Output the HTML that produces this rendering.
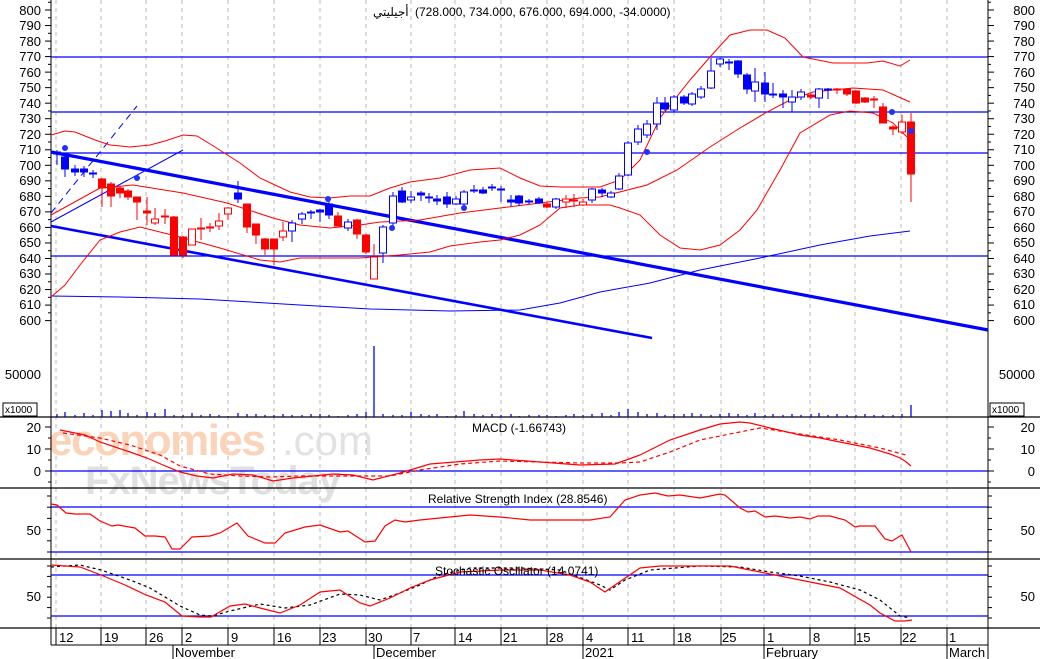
<!DOCTYPE html>
<html><head><meta charset="utf-8"><style>
body{margin:0;background:#fff;}
svg{display:block;font-family:"Liberation Sans",Arial,sans-serif;}
</style></head><body>
<svg id="s" width="1040" height="659" xmlns="http://www.w3.org/2000/svg">
<rect width="1040" height="659" fill="#fff"/>
<g id="grid"></g>
<!-- watermark -->
<text x="48" y="455" font-size="44" fill="#fbd3b8" font-weight="bold" letter-spacing="-1.5">economies</text>
<text x="282" y="455" font-size="42" fill="#e2e2e2">.com</text>
<text x="85" y="494" font-size="40" fill="#e0e0e0" font-weight="bold" letter-spacing="-1">FxNewsToday</text>
<g id="g"></g>
<!-- title -->
<text x="373" y="16" font-size="12" fill="#000" font-family="'DejaVu Sans',sans-serif">أجيليتي</text>
<text x="415" y="16" font-size="12" fill="#000" direction="ltr">(728.000, 734.000, 676.000, 694.000, -34.0000)</text>
<text x="472" y="432" font-size="12">MACD (-1.66743)</text>
<text x="428" y="503" font-size="12">Relative Strength Index (28.8546)</text>
<text x="435" y="575" font-size="12">Stochastic Oscillator (14.0741)</text>
<!-- left price labels -->
<g font-size="13" text-anchor="end" fill="#000">
<text x="41" y="15">800</text><text x="41" y="30">790</text><text x="41" y="46">780</text><text x="41" y="61">770</text><text x="41" y="77">760</text><text x="41" y="92">750</text><text x="41" y="108">740</text><text x="41" y="123">730</text><text x="41" y="139">720</text><text x="41" y="154">710</text><text x="41" y="170">700</text><text x="41" y="185">690</text><text x="41" y="201">680</text><text x="41" y="216">670</text><text x="41" y="232">660</text><text x="41" y="247">650</text><text x="41" y="263">640</text><text x="41" y="278">630</text><text x="41" y="294">620</text><text x="41" y="309">610</text><text x="41" y="325">600</text>
<text x="41" y="379">50000</text>
<text x="41" y="432">20</text><text x="41" y="454">10</text><text x="41" y="476">0</text>
<text x="41" y="535">50</text><text x="41" y="601">50</text>
</g>
<g font-size="13" text-anchor="end" fill="#000">
<text x="1035" y="15">800</text><text x="1035" y="30">790</text><text x="1035" y="46">780</text><text x="1035" y="61">770</text><text x="1035" y="77">760</text><text x="1035" y="92">750</text><text x="1035" y="108">740</text><text x="1035" y="123">730</text><text x="1035" y="139">720</text><text x="1035" y="154">710</text><text x="1035" y="170">700</text><text x="1035" y="185">690</text><text x="1035" y="201">680</text><text x="1035" y="216">670</text><text x="1035" y="232">660</text><text x="1035" y="247">650</text><text x="1035" y="263">640</text><text x="1035" y="278">630</text><text x="1035" y="294">620</text><text x="1035" y="309">610</text><text x="1035" y="325">600</text>
<text x="1035" y="379">50000</text>
<text x="1035" y="432">20</text><text x="1035" y="454">10</text><text x="1035" y="476">0</text>
<text x="1035" y="535">50</text><text x="1035" y="601">50</text>
</g>
<rect x="3" y="403" width="34" height="13" fill="#fff" stroke="#000"/>
<text x="5" y="413" font-size="10">x1000</text>
<rect x="990" y="403" width="34" height="13" fill="#fff" stroke="#000"/>
<text x="992" y="413" font-size="10">x1000</text>
<!-- date labels -->
<g font-size="13" fill="#000">
<text x="59" y="642">12</text><text x="104" y="642">19</text><text x="149" y="642">26</text><text x="185" y="642">2</text><text x="231" y="642">9</text><text x="277" y="642">16</text><text x="322" y="642">23</text><text x="368" y="642">30</text><text x="413" y="642">7</text><text x="458" y="642">14</text><text x="503" y="642">21</text><text x="549" y="642">28</text><text x="586" y="642">4</text><text x="631" y="642">11</text><text x="677" y="642">18</text><text x="722" y="642">25</text><text x="767" y="642">1</text><text x="813" y="642">8</text><text x="856" y="642">15</text><text x="902" y="642">22</text><text x="949" y="642">1</text>
<text x="175" y="657">November</text><text x="376" y="657">December</text><text x="585" y="657">2021</text><text x="766" y="657">February</text><text x="949" y="657">March</text>
</g>
</svg>
<script>
var NS="http://www.w3.org/2000/svg",g=document.getElementById('g'),gr=document.getElementById('grid');
function el(p,t,a){var e=document.createElementNS(NS,t);for(var k in a)e.setAttribute(k,a[k]);p.appendChild(e);return e;}
function ln(p,x1,y1,x2,y2,c,w,d){var a={x1:x1,y1:y1,x2:x2,y2:y2,stroke:c,'stroke-width':w||1};if(d)a['stroke-dasharray']=d;return el(p,'line',a);}
function pl(pts,c,w,d){var a={points:pts.map(function(p){return p.join(',')}).join(' '),fill:'none',stroke:c,'stroke-width':w||1};if(d)a['stroke-dasharray']=d;el(g,'polyline',a);}
var grid=[56,101,146,182,228,274,320,366,411,455,501,547,583,628,674,721,764,810,855,901,947];
grid.forEach(function(x){ln(gr,x,0,x,628,'#bbb',1,'4,4');});
[57,112,153,256].forEach(function(y){ln(g,51,y,988,y,'#0000ff',1.3);});
ln(g,51,471,988,471,'#00f',1.3);ln(g,51,507,988,507,'#00f',1.3);ln(g,51,552,988,552,'#00f',1.3);ln(g,51,575,988,575,'#00f',1.3);ln(g,51,616,988,616,'#00f',1.3);
ln(g,51,0,51,628,'#000',1);ln(g,988,0,988,628,'#000',1);
[417,488,559,628].forEach(function(y){ln(g,0,y,1040,y,'#000',1.3);});
ln(g,51,645,988,645,'#000',1);
ln(g,51,628,51,645,'#000',1);ln(g,988,628,988,659,'#000',1);
grid.forEach(function(x){ln(g,x,628,x,645,'#000',1);});
[173,374,583,764,947].forEach(function(x){ln(g,x,645,x,659,'#000',1);});
for(var p=600;p<=805;p+=5){var y=10+(800-p)*1.553;var L=(p%10==0)?6:3;ln(g,51-L,y,51,y,'#000',1);ln(g,988,y,988+L,y,'#000',1);}
[427,438,449,460,471,482].forEach(function(y){var L=(y==427||y==449||y==471)?6:3;ln(g,51-L,y,51,y,'#000');ln(g,988,y,988+L,y,'#000');});
for(var y=496;y<558;y+=11.2){ln(g,47,y,51,y,'#000');ln(g,988,y,992,y,'#000');}
for(var y=566;y<626;y+=10.4){ln(g,47,y,51,y,'#000');ln(g,988,y,992,y,'#000');}
ln(g,51,152,988,330,'#0000ff',3.2);
ln(g,51,226,652,338,'#0000ff',2.6);
ln(g,51,213,137,106,'#0000ff',1,'7,5');
ln(g,51,222,183,150,'#0000ff',1);
pl([[51,296],[120,297],[200,299],[300,305],[370,309],[450,311],[520,310],[560,303],[600,292],[650,283],[700,270],[760,258],[820,245],[870,236],[910,231]],'#0000ff',1);
pl([[51,135],[65,131],[75,132],[95,140],[110,145],[130,147],[150,145],[165,141],[183,135],[197,136],[215,147],[240,163],[260,178],[275,185],[290,192],[310,197],[330,198],[350,196],[370,196],[390,188],[410,182],[440,178],[470,170],[500,168],[520,178],[540,186],[560,187],[600,187],[620,180],[640,160],[660,118],[690,80],[710,57],[730,35],[750,30],[767,30],[785,38],[803,57],[833,63],[867,63],[883,61],[900,66],[910,60]],'#f00',1);
pl([[51,215],[100,188],[133,185],[183,193],[227,203],[273,218],[300,225],[330,228],[360,225],[380,222],[420,220],[460,213],[500,208],[540,203],[580,198],[600,197],[647,185],[677,170],[710,147],[740,128],[767,112],[790,100],[813,92],[853,88],[883,90],[910,102]],'#f00',1);
pl([[51,297],[65,285],[80,265],[100,240],[120,232],[140,227],[160,232],[180,237],[220,248],[260,260],[280,262],[300,258],[330,258],[360,258],[400,255],[430,252],[450,246],[480,242],[500,240],[520,235],[540,225],[560,208],[580,205],[610,205],[620,208],[640,215],[660,235],[680,248],[700,250],[720,245],[740,230],[757,210],[780,170],[800,133],[830,115],[850,111],[873,113],[893,123],[907,137]],'#f00',1);
var C=[[57,152,154,150,165,'b',1],[65,157,169,155,177,'b',1],[75,169,172,165,176,'b',1],[84,169,172,166,177,'b',1],[93,173,174,170,178,'b',1],
[102,179,188,178,207,'r',1],[111,184,196,182,207,'r',1],[120,188,193,186,198,'r',1],[128,191,197,189,200,'r',1],[137,197,202,197,220,'r',1],
[147,211,213,197,225,'r',1],[155,219,223,208,225,'r',0],[165,216,217,209,224,'r',1],[174,217,255,216,255,'r',1],[183,237,255,236,258,'r',1],
[192,229,245,229,245,'r',0],[201,228,229,218,240,'r',1],[210,227,228,223,232,'r',1],[219,221,226,213,230,'r',0],[228,208,214,207,220,'r',0],
[238,193,199,181,203,'b',1],[247,204,227,204,233,'r',1],[256,224,235,224,244,'r',1],[265,239,249,238,255,'r',1],[274,239,249,239,265,'r',1],
[283,231,237,222,241,'r',0],[292,223,231,220,242,'b',0],[302,214,219,212,224,'b',0],[311,212,213,210,219,'b',0],[320,210,212,209,222,'b',1],
[329,204,215,199,219,'b',1],[338,216,226,212,226,'r',1],[348,222,228,219,231,'b',0],[357,220,234,219,239,'r',1],[366,235,252,234,254,'r',1],
[374,257,279,244,279,'r',0],[383,227,253,225,263,'b',0],[393,196,223,192,227,'b',0],[402,191,202,187,203,'b',1],[411,197,200,191,203,'b',0],
[421,193,195,191,201,'b',1],[429,197,198,193,203,'b',1],[437,199,201,195,205,'b',1],[447,197,204,192,208,'b',1],[456,199,204,196,205,'b',0],
[464,192,204,190,206,'b',0],[474,190,191,185,193,'b',1],[483,190,193,187,194,'b',1],[492,187,188,184,191,'b',1],[501,189,190,186,202,'b',1],
[511,200,202,195,206,'b',1],[519,196,203,195,206,'b',1],[529,201,202,199,204,'b',1],[539,199,203,197,204,'b',1],[547,204,207,203,208,'r',1],
[556,199,207,198,209,'b',0],[566,199,202,195,208,'r',0],[574,200,201,194,207,'r',1],[583,202,205,199,206,'r',0],[592,189,200,188,203,'b',0],
[602,190,193,188,197,'b',1],[611,193,197,191,198,'b',0],[619,176,189,173,190,'b',0],[628,143,175,141,176,'b',0],[638,129,142,125,145,'b',0],
[647,124,135,120,138,'b',0],[657,103,124,97,130,'b',0],[665,103,109,97,111,'b',1],[674,97,110,95,112,'b',0],[684,97,103,95,105,'b',1],
[692,94,104,92,106,'b',0],[701,89,97,86,99,'b',0],[711,71,88,58,89,'b',0],[720,59,64,58,67,'b',0],[729,62,63,59,70,'b',1],
[738,61,74,60,78,'b',1],[747,75,89,73,94,'b',1],[755,82,91,68,102,'b',0],[765,83,94,72,102,'b',1],[773,94,95,83,98,'b',1],
[783,94,97,90,108,'b',1],[792,97,102,90,112,'b',0],[801,92,97,89,100,'b',0],[811,95,97,93,99,'r',1],[819,89,98,88,108,'b',0],
[828,89,90,88,99,'b',1],[837,89,90,88,94,'r',1],[847,89,94,88,96,'r',1],[856,91,103,90,104,'r',1],[865,98,102,97,103,'r',1],
[874,99,100,96,108,'r',1],[883,107,123,103,123,'r',1],[893,127,129,125,135,'r',1],[902,122,132,115,134,'r',0],[911,122,174,113,202,'r',1]];
C.forEach(function(c){var col=c[5]=='b'?'#0000ff':'#ff0000';
ln(g,c[0],c[3],c[0],c[4],col,1);
var h=Math.max(c[2]-c[1],1);
el(g,'rect',{x:c[0]-3.5,y:c[1],width:7,height:h,fill:c[6]?col:'#fff',stroke:col,'stroke-width':1});});
[[65,148],[137,178],[328,199],[392,228],[464,208],[647,152],[892,112],[911,131]].forEach(function(d){el(g,'circle',{cx:d[0],cy:d[1],r:3,fill:'#2030ff'});});
C.forEach(function(c,i){var h=[3,5,2,4,2,7,6,7,4,2,5,4,8,2,2,4,2,3,2,1,4,3,3,2,2,3,2,2,3,3,2,1,2,3,5,71,3,2,2,5,3,2,3,1,2,6,3,2,3,2,3,1,2,2,2,1,2,3,2,3,4,2,5,8,5,3,4,2,3,3,4,3,2,3,4,3,2,4,2,3,2,3,2,3,4,2,3,2,2,3,2,2,2,3,12][i]||2;
ln(g,c[0],417-h,c[0],417,'#0000ff',1.3);});
pl([[60,430],[85,435],[100,442],[130,452],[147,458],[163,465],[180,472],[197,476],[213,478],[233,474],[253,475],[273,481],[293,478],[313,476],[333,474],[353,475],[373,480],[400,473],[430,464],[480,460],[500,459],[540,462],[580,465],[615,464],[640,455],[670,440],[700,430],[720,424],[740,422],[750,423],[770,428],[800,435],[820,438],[850,444],[870,448],[890,454],[900,458],[905,461],[911,466]],'#f00',1.2);
pl([[63,433],[100,438],[130,445],[160,455],[180,466],[210,474],[240,476],[270,477],[300,476],[330,476],[360,476],[390,476],[420,470],[460,464],[500,461],[540,462],[580,463],[620,463],[640,462],[670,452],[700,440],[720,436],[740,432],[760,428],[800,434],[840,440],[880,448],[906,455]],'#f00',1.2,'4,3');
pl([[51,504],[57,505],[66,513],[75,514],[90,514],[100,521],[112,526],[118,525],[135,528],[145,536],[155,536],[165,537],[172,549],[180,549],[192,537],[210,536],[220,533],[237,523],[248,536],[265,543],[275,543],[285,533],[305,527],[320,525],[340,532],[348,531],[365,542],[375,541],[385,526],[395,520],[405,522],[420,520],[450,517],[470,515],[500,517],[530,520],[560,520],[590,520],[610,517],[625,500],[640,495],[655,493],[668,496],[680,495],[700,498],[720,494],[725,495],[740,508],[748,512],[755,511],[765,517],[775,516],[790,518],[800,517],[810,519],[818,516],[830,516],[845,520],[855,527],[860,526],[875,526],[885,539],[892,541],[900,536],[902,535],[911,552]],'#f00',1.2);
pl([[51,567],[80,565],[101,570],[130,580],[150,588],[180,606],[200,615],[212,616],[230,611],[260,604],[285,608],[310,605],[340,594],[360,595],[380,600],[400,593],[420,585],[440,575],[470,568],[520,568],[560,570],[600,585],[610,590],[625,580],[650,570],[700,566],[740,567],[770,572],[800,576],[830,582],[860,590],[880,600],[900,616],[910,618]],'#000',1.2,'3,3');
pl([[51,565],[80,567],[101,575],[125,585],[146,595],[165,602],[182,616],[200,617],[211,617],[230,606],[245,604],[260,608],[280,613],[300,605],[320,592],[340,590],[360,603],[370,606],[390,598],[410,588],[430,580],[460,572],[500,570],[540,570],[570,575],[590,582],[605,592],[615,585],[640,568],[660,566],[700,566],[730,566],[760,572],[800,580],[840,588],[870,605],[880,613],[895,621],[905,621],[912,620]],'#f00',1.2);
</script>
</body></html>
